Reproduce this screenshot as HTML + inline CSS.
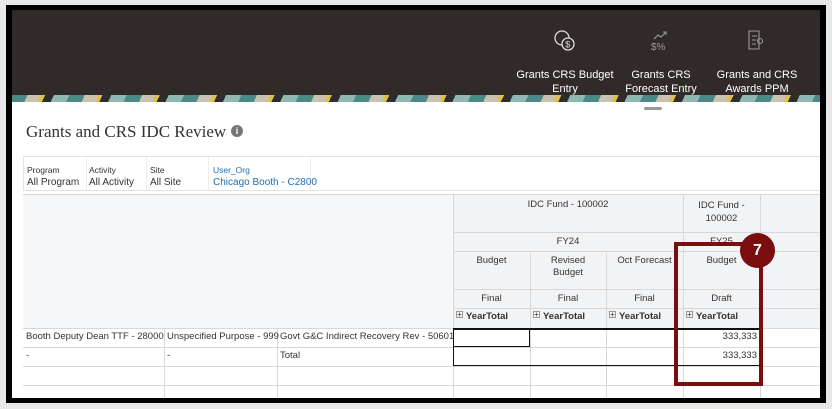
<!DOCTYPE html>
<html><head><style>
*{margin:0;padding:0;box-sizing:border-box}
body{width:832px;height:409px;background:#e8e8e8;position:relative;overflow:hidden;font-family:"Liberation Sans",sans-serif}
.frame{position:absolute;left:6px;top:5px;width:820px;height:398px;background:#000}
.inner{position:absolute;left:12px;top:10px;width:808px;height:388px;background:#fff;overflow:hidden}
.hdr{position:absolute;left:0;top:0;width:808px;height:85px;background:#302b28}
.strip{position:absolute;left:0;top:85px;width:808px;height:7px;background:repeating-linear-gradient(115deg,#4a8a86 0 14px,#c9c2b0 14px 26px,#e0c04a 26px 30px,#2d2d2d 30px 38px,#8fb8b2 38px 52px)}
.app{position:absolute;top:0;width:100px;text-align:center;color:#fff;font-size:11px;line-height:14px}
.t{position:absolute;font-size:11px;color:#333;white-space:nowrap}
.c{position:absolute;font-size:9.5px;color:#333;text-align:center;white-space:nowrap}
.hl{position:absolute;height:1px;background:#d8d8d8}
.vl{position:absolute;width:1px;background:#d8d8d8}
</style></head><body>
<div class="frame"></div>
<div class="inner">
<div class="hdr">
 <svg style="position:absolute;left:541px;top:19px" width="24" height="24" viewBox="0 0 24 24" fill="none" stroke="#ddd" stroke-width="1.3"><circle cx="9" cy="9" r="7"/><circle cx="15" cy="15" r="6" fill="#302b28"/><text x="12.3" y="18.5" font-size="9" fill="#ddd" stroke="none">$</text></svg>
 <svg style="position:absolute;left:637px;top:19px" width="24" height="24" viewBox="0 0 24 24" fill="none" stroke="#999" stroke-width="1.1"><path d="M5 10l4-4 3 2 5-5M14 3h3v3"/><text x="2" y="21" font-size="10" fill="#999" stroke="none">$%</text></svg>
 <svg style="position:absolute;left:733px;top:19px" width="22" height="24" viewBox="0 0 22 24" fill="none" stroke="#999" stroke-width="1.1"><path d="M4 2h10v18H4zM7 7h5M7 11h4M7 15h4"/><circle cx="15" cy="12" r="2.5"/></svg>
 <div class="app" style="left:503px;top:58px">Grants CRS Budget<br>Entry</div>
 <div class="app" style="left:599px;top:58px">Grants CRS<br>Forecast Entry</div>
 <div class="app" style="left:695px;top:58px">Grants and CRS<br>Awards PPM</div>
</div>
<div class="strip"></div>
<div style="position:absolute;left:632px;top:97px;width:18px;height:3px;background:#999;border-radius:2px"></div>
<div class="t" style="left:14px;top:112px;font-family:'Liberation Serif',serif;font-size:17px;color:#333">Grants and CRS IDC Review</div>
<div style="position:absolute;left:219px;top:115px;width:12px;height:12px;border-radius:50%;background:#777;color:#fff;font-size:9px;text-align:center;line-height:12px;font-weight:bold">i</div>
<div style="position:absolute;left:11px;top:146px;width:800px;height:35px;border:1px solid #e3e3e3"></div>
<div class="vl" style="left:74px;top:147px;height:33px;background:#eee"></div>
<div class="vl" style="left:134px;top:147px;height:33px;background:#eee"></div>
<div class="vl" style="left:196px;top:147px;height:33px;background:#eee"></div>
<div class="vl" style="left:298px;top:147px;height:33px;background:#eee"></div>
<div class="t" style="left:15px;top:155px;font-size:8.5px">Program</div><div class="t" style="left:15px;top:167px;font-size:10px">All Program</div>
<div class="t" style="left:77px;top:155px;font-size:8.5px">Activity</div><div class="t" style="left:77px;top:167px;font-size:10px">All Activity</div>
<div class="t" style="left:138px;top:155px;font-size:8.5px">Site</div><div class="t" style="left:138px;top:167px;font-size:10px">All Site</div>
<div class="t" style="left:201px;top:155px;font-size:8.5px;color:#1f6fb0">User_Org</div><div class="t" style="left:201px;top:167px;font-size:10px;color:#1f6fb0">Chicago Booth - C2800</div>
<!-- table -->
<div style="position:absolute;left:11px;top:185px;width:430px;height:133px;background:#f6f7f9"></div>
<div style="position:absolute;left:441px;top:185px;width:367px;height:133px;background:#f2f3f5"></div>
<div class="hl" style="left:11px;top:184px;width:797px"></div>
<div class="vl" style="left:441px;top:185px;height:205px"></div>
<div class="vl" style="left:518px;top:243px;height:147px"></div>
<div class="vl" style="left:594px;top:243px;height:147px"></div>
<div class="vl" style="left:671px;top:185px;height:205px"></div>
<div class="vl" style="left:748px;top:185px;height:205px"></div>
<div class="vl" style="left:152px;top:318px;height:72px"></div>
<div class="vl" style="left:265px;top:318px;height:72px"></div>
<div class="hl" style="left:441px;top:222px;width:367px"></div>
<div class="hl" style="left:441px;top:241px;width:367px"></div>
<div class="hl" style="left:441px;top:279px;width:367px"></div>
<div class="hl" style="left:441px;top:298px;width:367px"></div>
<div class="hl" style="left:11px;top:318px;width:797px"></div>
<div class="hl" style="left:11px;top:337px;width:797px"></div>
<div class="hl" style="left:11px;top:356px;width:797px"></div>
<div class="hl" style="left:11px;top:375px;width:797px"></div>
<div class="c" style="left:441px;top:189px;width:230px">IDC Fund - 100002</div>
<div class="c" style="left:671px;top:189px;width:77px;line-height:13px;white-space:normal">IDC Fund -<br>100002</div>
<div class="c" style="left:441px;top:226px;width:230px">FY24</div>
<div class="c" style="left:671px;top:226px;width:77px">FY25</div>
<div class="c" style="left:441px;top:245px;width:77px">Budget</div>
<div class="c" style="left:518px;top:245px;width:76px;line-height:12px">Revised<br>Budget</div>
<div class="c" style="left:594px;top:245px;width:77px">Oct Forecast</div>
<div class="c" style="left:671px;top:245px;width:77px">Budget</div>
<div class="c" style="left:441px;top:283px;width:77px">Final</div>
<div class="c" style="left:518px;top:283px;width:76px">Final</div>
<div class="c" style="left:594px;top:283px;width:77px">Final</div>
<div class="c" style="left:671px;top:283px;width:77px">Draft</div>
<div class="t" style="left:444px;top:301px;font-size:9.5px;font-weight:bold"><span style="font-weight:normal;font-size:8px;border:1px solid #999;display:inline-block;width:7px;height:7px;line-height:5px;text-align:center;vertical-align:top;margin-right:3px">+</span>YearTotal</div>
<div class="t" style="left:521px;top:301px;font-size:9.5px;font-weight:bold"><span style="font-weight:normal;font-size:8px;border:1px solid #999;display:inline-block;width:7px;height:7px;line-height:5px;text-align:center;vertical-align:top;margin-right:3px">+</span>YearTotal</div>
<div class="t" style="left:597px;top:301px;font-size:9.5px;font-weight:bold"><span style="font-weight:normal;font-size:8px;border:1px solid #999;display:inline-block;width:7px;height:7px;line-height:5px;text-align:center;vertical-align:top;margin-right:3px">+</span>YearTotal</div>
<div class="t" style="left:674px;top:301px;font-size:9.5px;font-weight:bold"><span style="font-weight:normal;font-size:8px;border:1px solid #999;display:inline-block;width:7px;height:7px;line-height:5px;text-align:center;vertical-align:top;margin-right:3px">+</span>YearTotal</div>
<div class="t" style="left:14px;top:321px;font-size:9.5px">Booth Deputy Dean TTF - 28000</div>
<div class="t" style="left:155px;top:321px;font-size:9.5px">Unspecified Purpose - 999</div>
<div class="t" style="left:268px;top:321px;font-size:9.5px">Govt G&amp;C Indirect Recovery Rev - 50601</div>
<div class="t" style="left:14px;top:340px;font-size:9.5px">-</div>
<div class="t" style="left:155px;top:340px;font-size:9.5px">-</div>
<div class="t" style="left:268px;top:340px;font-size:9.5px">Total</div>
<div class="t" style="left:700px;top:321px;font-size:9.5px;width:45px;text-align:right">333,333</div>
<div class="t" style="left:700px;top:340px;font-size:9.5px;width:45px;text-align:right">333,333</div>
<div style="position:absolute;left:441px;top:318px;width:77px;height:19px;border:1.5px solid #111"></div>
<div style="position:absolute;left:441px;top:337px;width:307px;height:19px;border:1.5px solid #111;border-top:none"></div>
<div style="position:absolute;left:441px;top:318px;width:307px;height:1.5px;background:#111"></div>
<div style="position:absolute;left:662px;top:232px;width:89px;height:144px;border:4px solid #7a0e0e"></div>
<div style="position:absolute;left:728px;top:223px;width:35px;height:35px;border-radius:50%;background:#7a0e0e;color:#fff;font-weight:bold;font-size:16px;text-align:center;line-height:35px">7</div>
</div>
</body></html>
